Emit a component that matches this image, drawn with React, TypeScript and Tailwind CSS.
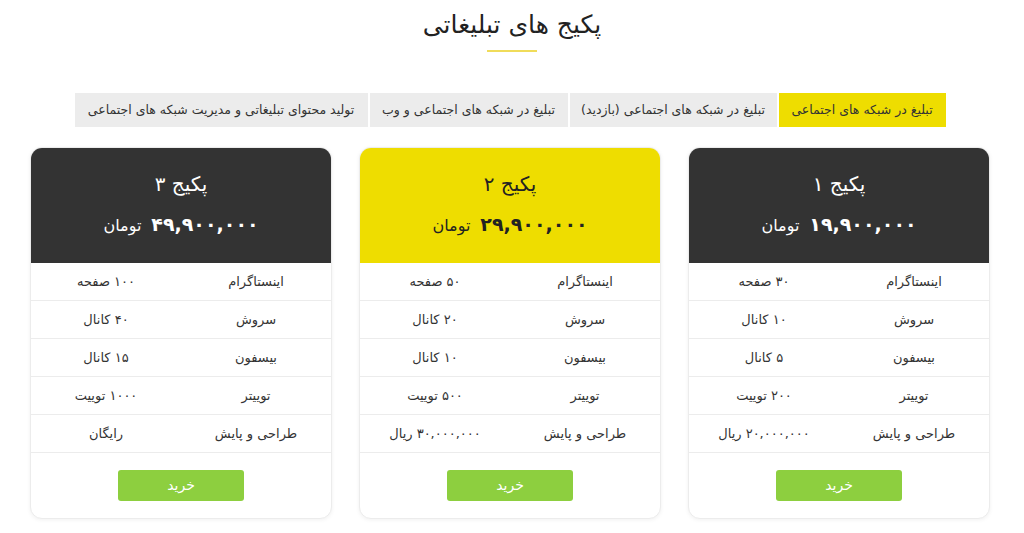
import React from "react";

type Row = { label: string; value: string };
type Plan = { title: string; price: string; rows: Row[]; featured?: boolean };

const plans: Plan[] = [
  {
    title: "پکیج ۱",
    price: "۱۹,۹۰۰,۰۰۰",
    rows: [
      { label: "اینستاگرام", value: "۳۰ صفحه" },
      { label: "سروش", value: "۱۰ کانال" },
      { label: "بیسفون", value: "۵ کانال" },
      { label: "توییتر", value: "۲۰۰ توییت" },
      { label: "طراحی و پایش", value: "۲۰,۰۰۰,۰۰۰ ریال" },
    ],
  },
  {
    title: "پکیج ۲",
    price: "۲۹,۹۰۰,۰۰۰",
    featured: true,
    rows: [
      { label: "اینستاگرام", value: "۵۰ صفحه" },
      { label: "سروش", value: "۲۰ کانال" },
      { label: "بیسفون", value: "۱۰ کانال" },
      { label: "توییتر", value: "۵۰۰ توییت" },
      { label: "طراحی و پایش", value: "۳۰,۰۰۰,۰۰۰ ریال" },
    ],
  },
  {
    title: "پکیج ۳",
    price: "۴۹,۹۰۰,۰۰۰",
    rows: [
      { label: "اینستاگرام", value: "۱۰۰ صفحه" },
      { label: "سروش", value: "۴۰ کانال" },
      { label: "بیسفون", value: "۱۵ کانال" },
      { label: "توییتر", value: "۱۰۰۰ توییت" },
      { label: "طراحی و پایش", value: "رایگان" },
    ],
  },
];

const tabs = [
  { text: "تبلیغ در شبکه های اجتماعی", w: "w-[167px]", active: true },
  { text: "تبلیغ در شبکه های اجتماعی (بازدید)", w: "w-[207px]" },
  { text: "تبلیغ در شبکه های اجتماعی و وب", w: "w-[198px]" },
  { text: "تولید محتوای تبلیغاتی و مدیریت شبکه های اجتماعی", w: "w-[293px]" },
];

function PlanCard({ plan }: { plan: Plan }) {
  return (
    <div className="w-[302px] rounded-[12px] border border-[#ececec] bg-white shadow-[0_1px_4px_rgba(0,0,0,0.06)] overflow-hidden">
      {/*---header---*/}
      <div
        className={
          plan.featured
            ? "h-[115px] bg-[#eedd00] text-[#222] flex flex-col items-center pt-[22px]"
            : "h-[115px] bg-[#333333] text-white flex flex-col items-center pt-[22px]"
        }
      >
        <h3 className="text-[20px] leading-[28px]">{plan.title}</h3>
        <div className="mt-[12px] flex items-baseline gap-[10px]">
          <span className="text-[19px] font-bold">{plan.price}</span>
          <span className="text-[16px]">تومان</span>
        </div>
      </div>
      {/*---rows---*/}
      {plan.rows.map((r) => (
        <div
          key={r.label}
          className="h-[38px] grid grid-cols-2 items-center border-b border-[#ececec] text-[13px] text-[#333]"
        >
          <span className="text-center">{r.label}</span>
          <span className="text-center">{r.value}</span>
        </div>
      ))}
      <div className="h-[65px] flex items-center justify-center">
        <button className="w-[126px] h-[31px] rounded-[3px] bg-[#8dcf3f] text-white text-[14px]">
          خرید
        </button>
      </div>
    </div>
  );
}

export default function App() {
  return (
    <div
      dir="rtl"
      className="w-[1024px] h-[533px] bg-white overflow-hidden"
      style={{ fontFamily: '"DejaVu Sans", "Noto Sans", sans-serif' }}
    >
      {/*---title---*/}
      <div className="flex flex-col items-center pt-[9px]">
        <h2 className="text-[25px] leading-[32px] text-[#222]">پکیج های تبلیغاتی</h2>
        <div className="mt-[9px] w-[50px] h-[2px] bg-[#f0dc5a]" />
      </div>

      {/*---tabs---*/}
      <div className="mt-[41px] flex justify-center gap-[2px] pr-[4px]">
        {tabs.map((t) => (
          <div
            key={t.text}
            className={
              (t.active ? "bg-[#eedd00] " : "bg-[#ececec] ") +
              t.w +
              " h-[34px] flex items-center justify-center text-[12.5px] text-[#333] whitespace-nowrap"
            }
          >
            {t.text}
          </div>
        ))}
      </div>

      {/*---cards---*/}
      <div className="mt-[20px] mr-[34px] w-[960px] flex justify-between">
        {plans.map((p) => (
          <PlanCard key={p.title} plan={p} />
        ))}
      </div>
    </div>
  );
}
